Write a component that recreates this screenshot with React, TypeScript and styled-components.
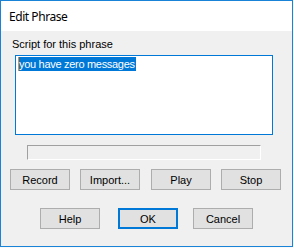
import React from "react";
import styled, { createGlobalStyle } from "styled-components";

const Global = createGlobalStyle`
  html, body { margin: 0; padding: 0; background: #f9f9f9; }
  * { box-sizing: border-box; }
`;

const Window = styled.div`
  width: 293px;
  height: 247px;
  border: 1px solid #1883d7;
  background: #f0f0f0;
  display: flex;
  flex-direction: column;
  font-family: "Liberation Sans", Arial, sans-serif;
  font-size: 11px;
  color: #000;
`;

const TitleBar = styled.div`
  height: 30px;
  background: #fff;
  display: flex;
  align-items: center;
  padding-left: 8px;
  font-family: "Noto Sans", "Open Sans", sans-serif;
  font-size: 12px;
  letter-spacing: -0.45px;
  color: #000;
`;

const Body = styled.div`
  flex: 1;
  display: flex;
  flex-direction: column;
  padding-top: 7px;
`;

const Label = styled.div`
  line-height: 13px;
  padding-left: 11px;
`;

const TextBox = styled.div`
  margin: 4px 0 0 14px;
  width: 258px;
  height: 80px;
  border: 1px solid #0078d7;
  background: #fff;
  padding: 1px 2px;
`;

const Selected = styled.span`
  display: inline-block;
  background: #0078d7;
  color: #fff;
  line-height: 14px;
  letter-spacing: -0.3px;
  border-left: 1px solid #f08a24;
  padding-right: 1px;
`;

const Progress = styled.div`
  margin: 10px 0 0 26px;
  width: 234px;
  height: 15px;
  border-top: 1px solid #a0a0a0;
  border-left: 1px solid #a0a0a0;
  border-right: 1px solid #fff;
  border-bottom: 1px solid #fff;
`;

const Row = styled.div<{ $top: number; $left: number }>`
  display: flex;
  margin-top: ${(p) => p.$top}px;
  padding-left: ${(p) => p.$left}px;
`;

const Button = styled.button<{ $default?: boolean; $ml?: number }>`
  width: 60px;
  height: 21px;
  margin: 0 0 0 ${(p) => p.$ml ?? 0}px;
  padding: 0;
  background: #e1e1e1;
  border: ${(p) => (p.$default ? "2px solid #0078d7" : "1px solid #adadad")};
  font-family: "Liberation Sans", Arial, sans-serif;
  font-size: 11px;
  color: #000;
  display: flex;
  align-items: center;
  justify-content: center;
`;

export default function App() {
  return (
    <>
      <Global />
      <Window>
        <TitleBar>Edit Phrase</TitleBar>
        <Body>
          <Label>Script for this phrase</Label>
          <TextBox>
            <Selected>you have zero messages</Selected>
          </TextBox>
          <Progress />
          <Row $top={9} $left={9}>
            <Button>Record</Button>
            <Button $ml={10}>Import...</Button>
            <Button $ml={11}>Play</Button>
            <Button $ml={10}>Stop</Button>
          </Row>
          <Row $top={18} $left={39}>
            <Button>Help</Button>
            <Button $default $ml={18}>OK</Button>
            <Button $ml={15}>Cancel</Button>
          </Row>
        </Body>
      </Window>
    </>
  );
}
